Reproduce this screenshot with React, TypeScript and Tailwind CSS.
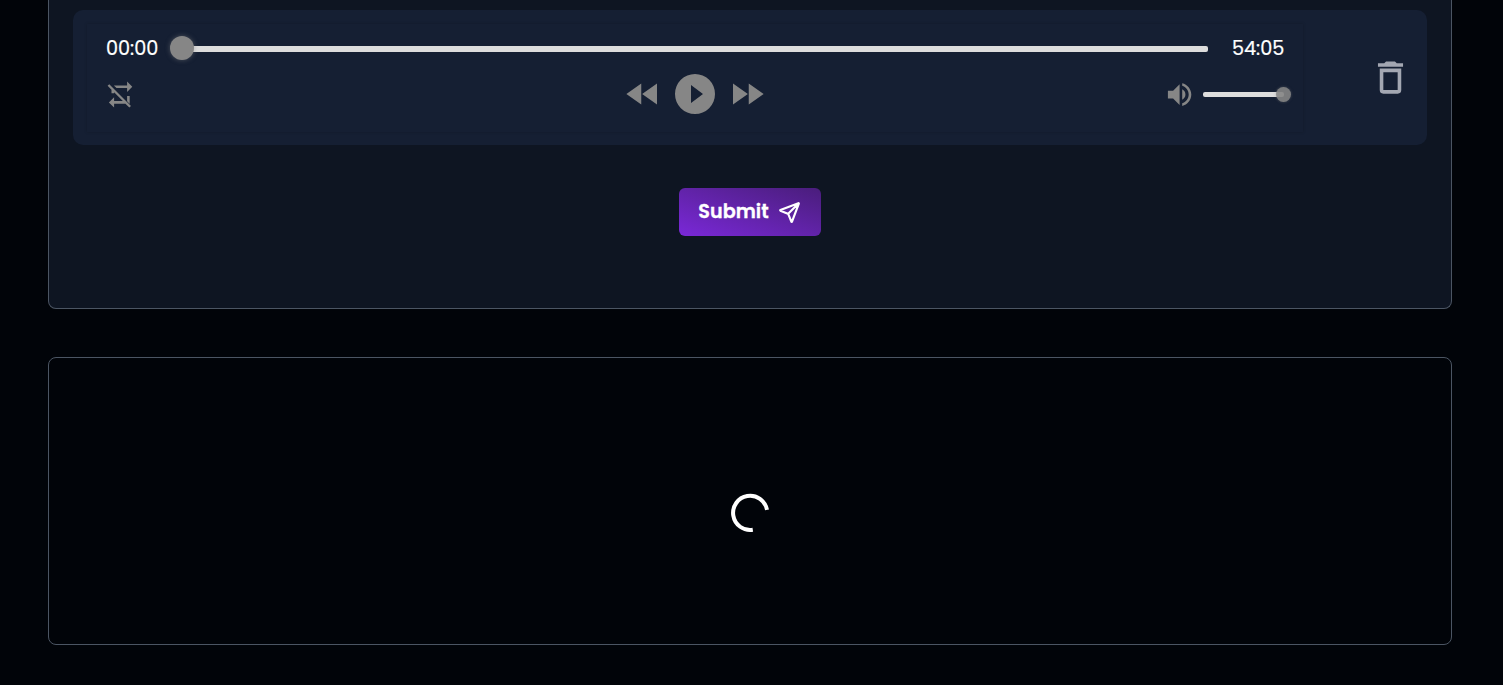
import React from "react";
import { IoPaperPlaneOutline } from "react-icons/io5";

function Icon({ d, className }: { d: string; className: string }) {
  return (
    <svg viewBox="0 0 24 24" fill="currentColor" className={`shrink-0 ${className}`}>
      <path d={d} />
    </svg>
  );
}

const REPEAT_OFF =
  "M2 5.27L3.28 4L20 20.72L18.73 22l-3-3H7v3l-4-4l4-4v3h6.73L7 10.27V11H5V8.27zM17 13h2v6h-.18L17 17.18zm0-8V2l4 4l-4 4V7H8.82l-2-2z";
const REWIND = "m11.5 12l8.5 6V6m-9 12V6l-8.5 6z";
const FORWARD = "M13 6v12l8.5-6M4 18l8.5-6L4 6z";
const PLAY =
  "M10 16.5v-9l6 4.5M12 2A10 10 0 0 0 2 12a10 10 0 0 0 10 10a10 10 0 0 0 10-10A10 10 0 0 0 12 2";
const VOLUME =
  "M14 3.23v2.06c2.89.86 5 3.54 5 6.71s-2.11 5.84-5 6.7v2.07c4-.91 7-4.49 7-8.77s-3-7.86-7-8.77m2.5 8.77c0-1.77-1-3.29-2.5-4.03V16c1.5-.71 2.5-2.24 2.5-4M3 9v6h4l5 5V4L7 9z";
const TRASH =
  "M6,19A2,2 0 0,0 8,21H16A2,2 0 0,0 18,19V7H6V19M8,9H16V19H8V9M15.5,4L14.5,3H9.5L8.5,4H5V6H19V4H15.5Z";

function Player() {
  return (
    <div className="h-[108px] w-[1216px] px-[18px] pt-[11px] text-[#868686] shadow-[0_0_3px_rgba(0,0,0,0.2)]">
      <div className="flex h-[28px] items-center">
        <span className="w-[54px] shrink-0 pt-[2px] pl-px text-[19.2px] whitespace-nowrap text-white [-webkit-text-stroke:0.2px_white]">
          00:00
        </span>
        <div className="relative ml-[23px] h-[6px] w-[1026px] shrink-0 rounded-[2px] bg-[#dddddd]">
          <span className="absolute -top-[10px] -left-[12px] size-[24px] rounded-full bg-[#868686] shadow-[0_0_5px_rgba(134,134,134,0.5)]" />
        </div>
        <span className="ml-[24px] pt-[2px] text-[19.2px] whitespace-nowrap text-white [-webkit-text-stroke:0.2px_white]">
          54:05
        </span>
      </div>
      <div className="flex h-[62px] items-center">
        <div className="flex flex-1 items-center pt-[2px]">
          <Icon d={REPEAT_OFF} className="size-[31.2px]" />
        </div>
        <div className="flex items-center gap-[7px]">
          <Icon d={REWIND} className="size-[42px]" />
          <Icon d={PLAY} className="size-[48px]" />
          <Icon d={FORWARD} className="size-[42px]" />
        </div>
        <div className="flex flex-1 items-center justify-end pt-[2px]">
          <Icon d={VOLUME} className="size-[31.2px]" />
          <div className="relative mr-px ml-[8px] h-[5px] w-[81px] rounded-[2px] bg-[#dddddd]">
            <span className="absolute -top-[5px] -right-[7px] size-[15px] rounded-full bg-[#868686] opacity-90 shadow-[0_0_3px_rgba(134,134,134,0.5)]" />
          </div>
        </div>
      </div>
    </div>
  );
}

export default function App() {
  return (
    <div className="flex h-[685px] flex-col overflow-hidden bg-[#010409] px-[48px] font-['Poppins','Inter',sans-serif]">
      <section className="flex h-[309px] w-[1404px] shrink-0 flex-col items-center rounded-b-[8px] border border-t-0 border-[#4b5563] bg-[#0e1522] px-[24px] pt-[10px]">
        <div className="flex h-[135px] w-full items-center justify-between rounded-[10px] bg-[#151f33] pr-[15px] pl-[14px]">
          <Player />
          <button aria-label="Delete" className="text-[#a3a7b2]">
            <Icon d={TRASH} className="size-[43px]" />
          </button>
        </div>
        <button className="mt-[43px] flex h-[48px] w-[142px] items-center rounded-[6px] bg-linear-to-tr from-[#7a28d8] to-[#4a1d7c] pl-[19px] text-[19.2px] font-semibold text-white">
          <span className="w-[71px] whitespace-nowrap [-webkit-text-stroke:0.3px_white]">Submit</span>
          <IoPaperPlaneOutline className="ml-[9px] size-[23px] [&_path]:[stroke-width:48px]" />
        </button>
      </section>
      <section className="mt-[48px] flex h-[288px] w-[1404px] shrink-0 items-center justify-center rounded-[8px] border border-[#4b5563]">
        <svg viewBox="0 0 40 40" className="mt-[24px] size-[40px]" fill="none" stroke="#fff" strokeWidth="4">
          <path d="M37 16.8A17.1 17.1 0 1 0 22.8 36.8" />
        </svg>
      </section>
    </div>
  );
}
